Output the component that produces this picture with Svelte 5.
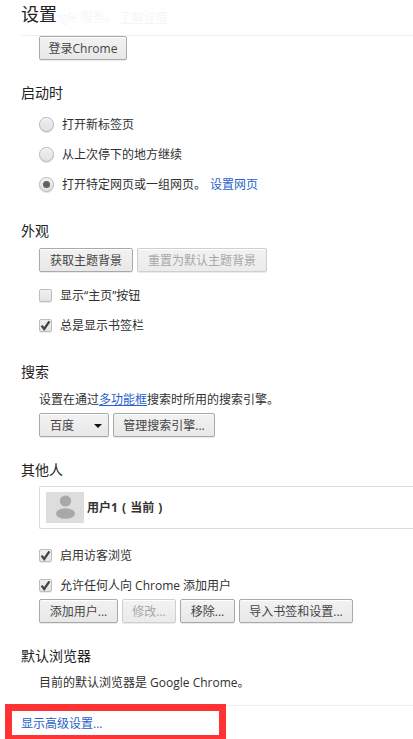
<script>
  const radios = [
    { label: '打开新标签页', on: false },
    { label: '从上次停下的地方继续', on: false },
    { label: '打开特定网页或一组网页。', on: true, link: '设置网页' }
  ];
</script>

{#snippet check(label, on)}
  <div class="opt chk">
    <span class="box">
      {#if on}
        <svg width="13" height="13" viewBox="0 0 13 13"><path d="M2.6 6.6 L5.2 10 L10.4 2.4" fill="none" stroke="#444" stroke-width="2.3"/></svg>
      {/if}
    </span>
    <span class="label">{label}</span>
  </div>
{/snippet}

<div class="page">
  <header class="head">
    <h1>设置</h1>
    <span class="ghost">ogle 服务。 <u>了解详情</u></span>
  </header>

  <div class="indent signin"><button class="w88">登录Chrome</button></div>

  <section class="startup">
    <h3>启动时</h3>
    <div class="indent radios">
      {#each radios as r}
        <div class="opt rad">
          <span class="radio">{#if r.on}<i></i>{/if}</span>
          <span class="label">{r.label}{#if r.link}<a class="plain link1" href="#a">{r.link}</a>{/if}</span>
        </div>
      {/each}
    </div>
  </section>

  <section class="look">
    <h3>外观</h3>
    <div class="indent">
      <div class="row"><button class="w94">获取主题背景</button><button disabled class="w130">重置为默认主题背景</button></div>
      <div class="checks first">
        {@render check('显示“主页”按钮', false)}
        {@render check('总是显示书签栏', true)}
      </div>
    </div>
  </section>

  <section class="search">
    <h3>搜索</h3>
    <div class="indent">
      <p class="desc">设置在通过<a class="under" href="#b">多功能框</a>搜索时所用的搜索引擎。</p>
      <div class="row">
        <button class="select"><span>百度</span><i class="arrow"></i></button>
        <button class="w102">管理搜索引擎...</button>
      </div>
    </div>
  </section>

  <section class="people">
    <h3>其他人</h3>
    <div class="indent">
      <div class="list">
        <div class="avatar">
          <svg width="38" height="31" viewBox="0 0 38 31"><circle cx="19.5" cy="9" r="5.6" fill="#a8a8a8"/><ellipse cx="19.5" cy="21.5" rx="9.5" ry="5.3" fill="#a8a8a8"/></svg>
        </div>
        <b>用户1 ( 当前 )</b>
      </div>
      <div class="checks">
        {@render check('启用访客浏览', true)}
        {@render check('允许任何人向 Chrome 添加用户', true)}
      </div>
      <div class="row">
        <button class="w79">添加用户...</button><button disabled class="w54">修改...</button><button class="w55">移除...</button><button class="w114">导入书签和设置...</button>
      </div>
    </div>
  </section>

  <section class="browser">
    <h3>默认浏览器</h3>
    <p class="indent desc current">目前的默认浏览器是 Google Chrome。</p>
  </section>

  <footer class="foot"><a class="plain" href="#c">显示高级设置...</a></footer>
  <div class="mark"></div>
</div>

<style>
  :global(body) { margin: 0; background: #fff; overflow: hidden; }
  .page {
    position: relative;
    width: 413px;
    height: 739px;
    overflow: hidden;
    font: 12px/16px "Open Sans", "Noto Sans CJK SC", sans-serif;
    color: #303030;
  }
  .head {
    position: relative;
    height: 35px;
    margin-left: 21px;
    border-bottom: 1px solid #eeeeee;
  }
  h1 {
    margin: 0;
    padding-top: 2px;
    font-size: 18px;
    line-height: 24px;
    font-weight: 400;
    color: #222;
  }
  .ghost {
    position: absolute;
    left: 33px;
    top: 10px;
    color: #f4f6fa;
  }
  .indent { margin-left: 39px; }
  section { margin-left: 21px; }
  section .indent { margin-left: 18px; }
  h3 {
    margin: 0;
    height: 20px;
    font-size: 14px;
    line-height: 22px;
    font-weight: 400;
    color: #222;
  }
  button {
    display: inline-flex;
    align-items: center;
    justify-content: center;
    box-sizing: border-box;
    height: 24px;
    margin: 0;
    padding: 2px 4px 0;
    font: inherit;
    color: #444;
    background: linear-gradient(#f2f2f2, #e8e8e8);
    border: 1px solid #a9a9a9;
    border-radius: 2px;
    box-shadow: 0 1px 0 rgba(0,0,0,.08), inset 0 1px 0 #fff;
    white-space: nowrap;
  }
  button:disabled {
    color: #a8a8a8;
    border-color: #cfcfcf;
    background: linear-gradient(#f2f2f2, #ebebeb);
  }
  .w88 { width: 88px; }
  .w94 { width: 94px; }
  .w130 { width: 130px; }
  .w102 { width: 102px; }
  .row { display: flex; gap: 4px; }
  .opt { display: flex; align-items: center; white-space: nowrap; }
  .label { height: 16px; line-height: 18px; }
  .signin { height: 24px; }
  .startup { padding-top: 22px; }
  .radios { padding-top: 14px; display: flex; flex-direction: column; gap: 14px; }
  .rad { height: 16px; gap: 8px; }
  .radio {
    box-sizing: border-box;
    display: flex;
    align-items: center;
    justify-content: center;
    width: 15px;
    height: 15px;
    border: 1px solid #b4b4b4;
    border-radius: 50%;
    background: linear-gradient(#eeeeee, #e2e2e2);
    box-shadow: 0 1px 0 rgba(0,0,0,.12), inset 0 1px 0 #fff;
  }
  .radio i { width: 7px; height: 7px; border-radius: 50%; background: #606060; }
  .link1 { margin-left: 4px; }
  a.plain { color: #2a5fc9; text-decoration: none; }
  a.under { color: #2a5fc9; text-decoration: underline; }
  .look { padding-top: 28px; }
  .look .row { padding-top: 8px; }
  .checks { display: flex; flex-direction: column; gap: 14px; }
  .checks.first { padding-top: 15px; }
  .chk { height: 16px; gap: 8px; }
  .box {
    box-sizing: border-box;
    width: 13px;
    height: 13px;
    border: 1px solid #bdbdbd;
    border-radius: 2px;
    background: linear-gradient(#f0f0f0, #e4e4e4);
    box-shadow: 0 1px 0 rgba(0,0,0,.08);
    display: flex;
    align-items: center;
    justify-content: center;
    flex: none;
  }
  .box svg { margin: -1px; }
  .search { padding-top: 28px; }
  .desc { margin: 0; line-height: 18px; height: 16px; }
  .search .desc { margin-top: 10px; }
  .search .row { padding-top: 6px; }
  .select { width: 70px; justify-content: space-between; padding: 2px 6px 0 10px; }
  .arrow {
    width: 0; height: 0;
    border-left: 4px solid transparent;
    border-right: 4px solid transparent;
    border-top: 4px solid #111;
  }
  .people { padding-top: 22px; }
  .list {
    box-sizing: border-box;
    height: 43px;
    margin-top: 7px;
    margin-right: -20px;
    padding-left: 6px;
    display: flex;
    align-items: center;
    gap: 3px;
    border: 1px solid #dcdcdc;
    border-right: 0;
    border-radius: 2px 0 0 2px;
  }
  .list b { font-weight: 700; color: #333; word-spacing: 1px; }
  .avatar { width: 38px; height: 31px; background: #dddddd; display: flex; }
  .people .checks { padding-top: 18px; }
  .people .row { padding-top: 6px; }
  .w79 { width: 79px; }
  .w54 { width: 54px; }
  .w55 { width: 55px; }
  .w114 { width: 114px; }
  .browser { padding-top: 22px; }
  .current { margin-top: 9px; }
  .foot {
    margin-top: 15px;
    margin-left: 21px;
    padding-top: 10px;
    border-top: 1px solid #eeeeee;
  }
  .mark {
    position: absolute;
    left: 5px;
    top: 704px;
    width: 207px;
    height: 24px;
    border: 7px solid #ff3333;
    pointer-events: none;
  }
</style>
